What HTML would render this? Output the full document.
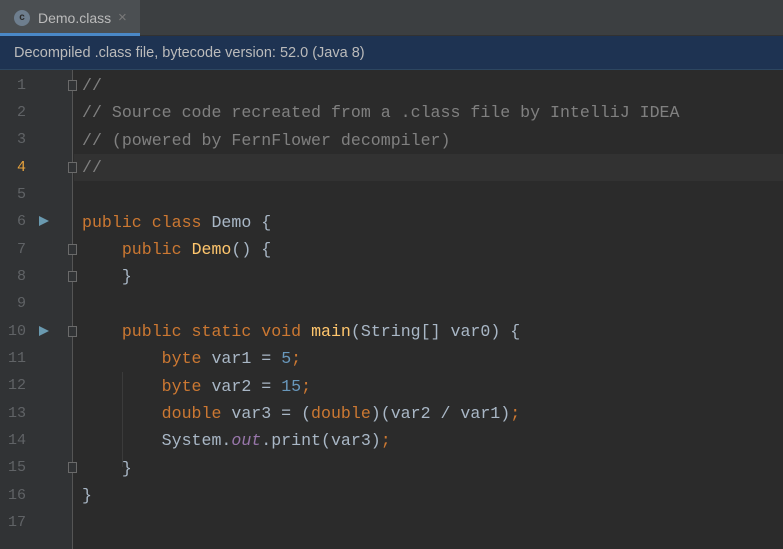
<!DOCTYPE html>
<html><head><style>
*{margin:0;padding:0;box-sizing:border-box}
body{width:783px;height:549px;overflow:hidden;background:#2b2b2b;font-family:"Liberation Sans",sans-serif;position:relative}
.tabs{position:absolute;left:0;top:0;width:783px;height:36px;background:#3c3f41;border-bottom:1px solid #323232}
.tab{position:absolute;left:0;top:0;width:140px;height:36px;background:#4b4f52;border-bottom:3px solid #4a88c7}
.tab .ic{position:absolute;left:14px;top:10px;width:16px;height:16px;border-radius:50%;background:#6e7e8e;color:#2b2b2b;font-size:10px;text-align:center;line-height:16px;font-weight:bold}
.tab .t{position:absolute;left:38px;top:10px;font-size:14px;color:#bbbbbb}
.tab .x{position:absolute;left:118px;top:9px;font-size:15px;color:#7a7a7a}
.banner{position:absolute;left:0;top:36px;width:783px;height:34px;background:#1e3352;border-bottom:1px solid #2d4660;color:#bbbbbb;font-size:14.5px;line-height:34px;padding-left:14px}
.gut{position:absolute;left:0;top:70px;width:73px;height:479px;background:#313335;border-right:1px solid #555}
.code{position:absolute;left:74px;top:72px;right:0}
.ln{position:absolute;left:0;width:26px;text-align:right;font-family:"Liberation Mono",monospace;font-size:15px;color:#606366}
.row{position:absolute;left:0;right:0;height:27.33px;line-height:27.33px;font-family:"Liberation Mono",monospace;font-size:16.6px;color:#a9b7c6;white-space:pre;padding-left:8px}
.cur{background:#323232}
.k{color:#cc7832}.c{color:#808080}.n{color:#6897bb}.m{color:#ffc66d}.o{color:#9876aa;font-style:italic}
.run{position:absolute;left:39px;width:0;height:0;border-top:5px solid transparent;border-bottom:5px solid transparent;border-left:10px solid #6a9ab0}
.fold{position:absolute;left:68px;width:9px;height:11px;border:1px solid #6a6a6a;background:#313335}
.guide{position:absolute;width:1px;background:#3b3b3b}
</style></head><body>
<div class="tabs"><div class="tab"><div class="ic">c</div><div class="t">Demo.class</div><div class="x">×</div></div></div>
<div class="banner">Decompiled .class file, bytecode version: 52.0 (Java 8)</div>
<div class="gut"></div>
<div class="code">
<div class="row" style="top:0"><span class="c">//</span></div>
<div class="row" style="top:27.33px"><span class="c">// Source code recreated from a .class file by IntelliJ IDEA</span></div>
<div class="row" style="top:54.66px"><span class="c">// (powered by FernFlower decompiler)</span></div>
<div class="row cur" style="top:82px"><span class="c">//</span></div>
<div class="row" style="top:136.7px"><span class="k">public class</span> Demo {</div>
<div class="row" style="top:164px">    <span class="k">public</span> <span class="m">Demo</span>() {</div>
<div class="row" style="top:191.3px">    }</div>
<div class="row" style="top:246px">    <span class="k">public static void</span> <span class="m">main</span>(String[] var0) {</div>
<div class="row" style="top:273.3px">        <span class="k">byte</span> var1 = <span class="n">5</span><span class="k">;</span></div>
<div class="row" style="top:300.6px">        <span class="k">byte</span> var2 = <span class="n">15</span><span class="k">;</span></div>
<div class="row" style="top:328px">        <span class="k">double</span> var3 = (<span class="k">double</span>)(var2 / var1)<span class="k">;</span></div>
<div class="row" style="top:355.3px">        System.<span class="o">out</span>.print(var3)<span class="k">;</span></div>
<div class="row" style="top:382.6px">    }</div>
<div class="row" style="top:410px">}</div>
<div class="guide" style="left:48px;top:300px;height:95px"></div>
</div>
<div class="ln" style="top:77px">1</div>
<div class="ln" style="top:104px">2</div>
<div class="ln" style="top:131px">3</div>
<div class="ln" style="top:159px;color:#e8a33d">4</div>
<div class="ln" style="top:186px">5</div>
<div class="ln" style="top:213px">6</div>
<div class="ln" style="top:241px">7</div>
<div class="ln" style="top:268px">8</div>
<div class="ln" style="top:295px">9</div>
<div class="ln" style="top:323px">10</div>
<div class="ln" style="top:350px">11</div>
<div class="ln" style="top:377px">12</div>
<div class="ln" style="top:405px">13</div>
<div class="ln" style="top:432px">14</div>
<div class="ln" style="top:459px">15</div>
<div class="ln" style="top:487px">16</div>
<div class="ln" style="top:514px">17</div>
<div class="run" style="top:216px"></div>
<div class="run" style="top:326px"></div>
<div class="fold" style="top:80px"></div>
<div class="fold" style="top:162px"></div>
<div class="fold" style="top:244px"></div>
<div class="fold" style="top:271px"></div>
<div class="fold" style="top:326px"></div>
<div class="fold" style="top:462px"></div>
</body></html>
